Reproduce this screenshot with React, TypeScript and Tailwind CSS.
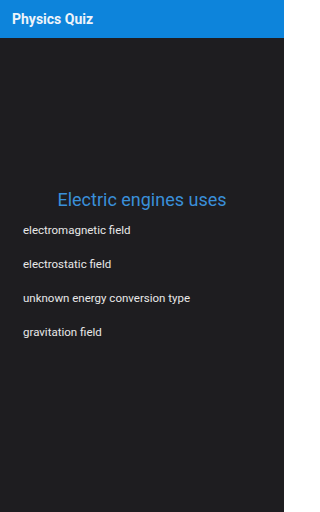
const options = [
  'electromagnetic field',
  'electrostatic field',
  'unknown energy conversion type',
  'gravitation field'
]

export default function App() {
  return (
    <div className="flex h-[512px] w-[284px] flex-col bg-[#1e1d20] font-['Roboto',sans-serif]">
      <header className="flex h-[38px] items-center bg-[#0d84db] px-3">
        <h1 className="text-[14px] font-bold text-[#eef4fa]">Physics Quiz</h1>
      </header>
      <main className="flex flex-1 flex-col pt-[150px]">
        <h2 className="text-center text-[18px] leading-[24px] text-[#3a8fd9]">Electric engines uses</h2>
        <ul className="mt-[1px] flex flex-col px-[23px]">
          {options.map((option) => (
            <li key={option} className="h-[34px] text-[11.5px] leading-[34px] text-[#e8e8e8]">
              {option}
            </li>
          ))}
        </ul>
      </main>
    </div>
  )
}
